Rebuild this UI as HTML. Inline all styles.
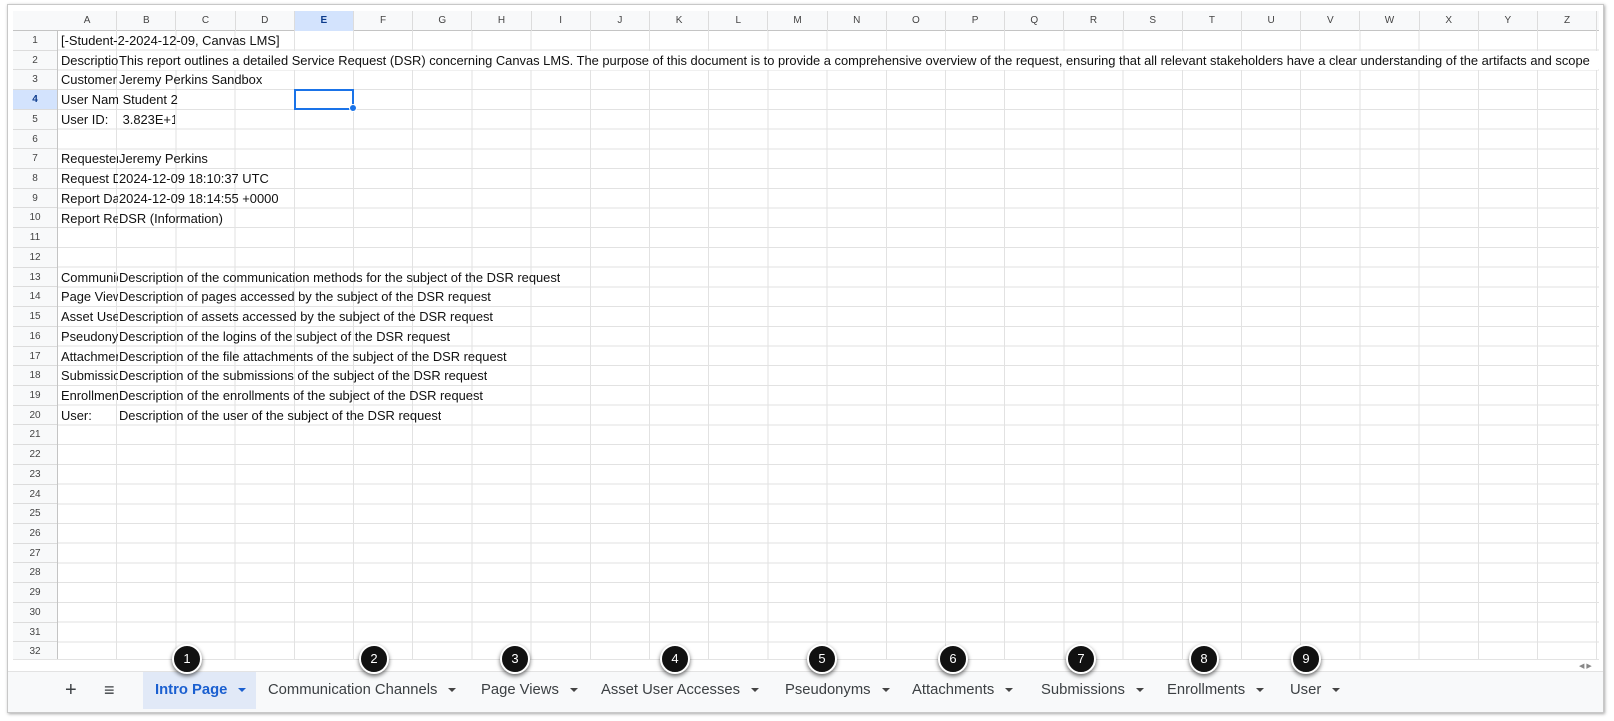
<!DOCTYPE html>
<html><head><meta charset="utf-8"><style>
*{margin:0;padding:0;box-sizing:border-box}
body{width:1614px;height:721px;background:#fff;position:relative;overflow:hidden;font-family:"Liberation Sans",Arial,sans-serif}
#frame{position:absolute;left:7px;top:4px;width:1597px;height:709px;border:1px solid #c8c8c8;box-shadow:1px 1px 3px rgba(0,0,0,.35);background:#fff;overflow:hidden}
.abs{position:absolute}
#grid{left:50px;top:26px;width:1541px;height:628px;
background-image:repeating-linear-gradient(to right,transparent 0,transparent 58.2px,#e2e2e2 58.2px,#e2e2e2 59.2px),repeating-linear-gradient(to bottom,transparent 0,transparent 18.72px,#e2e2e2 18.72px,#e2e2e2 19.72px);}
#colh{left:5px;top:6px;width:1586px;height:20px;background:#f8f9fa;border-bottom:1px solid #c4c4c4}
#rowh{left:5px;top:26px;width:45px;height:628px;background:#f8f9fa;border-right:1px solid #c4c4c4}
.ch{position:absolute;top:0;height:20px;width:59.2px;text-align:center;font-size:10px;line-height:20px;color:#444;border-right:1px solid #dcdcdc}
.rh{position:absolute;left:0;width:44px;height:19.72px;text-align:center;font-size:10px;line-height:19px;color:#444;border-bottom:1px solid #dcdcdc}
.c{position:absolute;font-size:12.9px;line-height:19.72px;color:#111;white-space:nowrap;overflow:hidden}
#tabs{left:0;top:666px;width:1597px;height:43px;background:#f8f9fa;border-top:1px solid #e3e3e3}
.t{position:absolute;top:0;height:37px;line-height:37px;font-size:14.8px;color:#3c4043;white-space:nowrap}
.t i{display:inline-block;width:0;height:0;border-left:4px solid transparent;border-right:4px solid transparent;border-top:4px solid #444;margin-left:11px;vertical-align:middle}
.b{position:absolute;top:644px;width:30px;height:30px;border-radius:50%;background:#111;border:2px solid #fff;box-shadow:0 2px 4px rgba(0,0,0,.6);color:#fff;font-size:13px;text-align:center;line-height:26px;z-index:5}
</style></head><body>
<div id="frame">
<div class="abs" id="grid"></div>
<div class="abs" id="colh">
<div class="ch" style="left:45px">A</div><div class="ch" style="left:104.2px">B</div><div class="ch" style="left:163.4px">C</div><div class="ch" style="left:222.6px">D</div><div class="ch" style="left:281.8px;background:#d3e3fd;font-weight:bold;color:#0b3a8c">E</div><div class="ch" style="left:341px">F</div><div class="ch" style="left:400.2px">G</div><div class="ch" style="left:459.4px">H</div><div class="ch" style="left:518.6px">I</div><div class="ch" style="left:577.8px">J</div><div class="ch" style="left:637px">K</div><div class="ch" style="left:696.2px">L</div><div class="ch" style="left:755.4px">M</div><div class="ch" style="left:814.6px">N</div><div class="ch" style="left:873.8px">O</div><div class="ch" style="left:933px">P</div><div class="ch" style="left:992.2px">Q</div><div class="ch" style="left:1051.4px">R</div><div class="ch" style="left:1110.6px">S</div><div class="ch" style="left:1169.8px">T</div><div class="ch" style="left:1229px">U</div><div class="ch" style="left:1288.2px">V</div><div class="ch" style="left:1347.4px">W</div><div class="ch" style="left:1406.6px">X</div><div class="ch" style="left:1465.8px">Y</div><div class="ch" style="left:1525px">Z</div>
</div>
<div class="abs" id="rowh">
<div class="rh" style="top:0">1</div><div class="rh" style="top:19.72px">2</div><div class="rh" style="top:39.44px">3</div><div class="rh" style="top:59.16px;background:#d3e3fd;font-weight:bold;color:#0b3a8c">4</div><div class="rh" style="top:78.88px">5</div><div class="rh" style="top:98.6px">6</div><div class="rh" style="top:118.32px">7</div><div class="rh" style="top:138.04px">8</div><div class="rh" style="top:157.76px">9</div><div class="rh" style="top:177.48px">10</div><div class="rh" style="top:197.2px">11</div><div class="rh" style="top:216.92px">12</div><div class="rh" style="top:236.64px">13</div><div class="rh" style="top:256.36px">14</div><div class="rh" style="top:276.08px">15</div><div class="rh" style="top:295.8px">16</div><div class="rh" style="top:315.52px">17</div><div class="rh" style="top:335.24px">18</div><div class="rh" style="top:354.96px">19</div><div class="rh" style="top:374.68px">20</div><div class="rh" style="top:394.4px">21</div><div class="rh" style="top:414.12px">22</div><div class="rh" style="top:433.84px">23</div><div class="rh" style="top:453.56px">24</div><div class="rh" style="top:473.28px">25</div><div class="rh" style="top:493px">26</div><div class="rh" style="top:512.72px">27</div><div class="rh" style="top:532.44px">28</div><div class="rh" style="top:552.16px">29</div><div class="rh" style="top:571.88px">30</div><div class="rh" style="top:591.6px">31</div><div class="rh" style="top:611.32px">32</div>
</div>
<div class="c" style="left:53px;top:26px">[-Student-2-2024-12-09, Canvas LMS]</div>
<div class="c" style="left:53px;top:45.7px;width:57px">Description</div>
<div class="c" style="left:110px;top:45.7px;width:1480px;background:#fff;padding-left:1px">This report outlines a detailed Service Request (DSR) concerning Canvas LMS. The purpose of this document is to provide a comprehensive overview of the request, ensuring that all relevant stakeholders have a clear understanding of the artifacts and scope</div>
<div class="c" style="left:53px;top:65.4px;width:57px">Customer</div>
<div class="c" style="left:111px;top:65.4px">Jeremy Perkins Sandbox</div>
<div class="c" style="left:53px;top:85.2px;width:57px">User Name</div>
<div class="c" style="left:111px;top:85.2px">&nbsp;Student 2</div>
<div class="c" style="left:53px;top:104.9px;width:57px">User ID:</div>
<div class="c" style="left:111px;top:104.9px;width:56px">&nbsp;3.823E+10</div>
<div class="c" style="left:53px;top:144.3px;width:57px">Requester</div>
<div class="c" style="left:111px;top:144.3px">Jeremy Perkins</div>
<div class="c" style="left:53px;top:164px;width:57px">Request Date</div>
<div class="c" style="left:111px;top:164px">2024-12-09 18:10:37 UTC</div>
<div class="c" style="left:53px;top:183.8px;width:57px">Report Date</div>
<div class="c" style="left:111px;top:183.8px">2024-12-09 18:14:55 +0000</div>
<div class="c" style="left:53px;top:203.5px;width:57px">Report Reason</div>
<div class="c" style="left:111px;top:203.5px">DSR (Information)</div>
<div class="c" style="left:53px;top:262.6px;width:57px">Communication</div>
<div class="c" style="left:111px;top:262.6px">Description of the communication methods for the subject of the DSR request</div>
<div class="c" style="left:53px;top:282.4px;width:57px">Page Views</div>
<div class="c" style="left:111px;top:282.4px">Description of pages accessed by the subject of the DSR request</div>
<div class="c" style="left:53px;top:302.1px;width:57px">Asset User</div>
<div class="c" style="left:111px;top:302.1px">Description of assets accessed by the subject of the DSR request</div>
<div class="c" style="left:53px;top:321.8px;width:57px">Pseudonyms</div>
<div class="c" style="left:111px;top:321.8px">Description of the logins of the subject of the DSR request</div>
<div class="c" style="left:53px;top:341.5px;width:57px">Attachments</div>
<div class="c" style="left:111px;top:341.5px">Description of the file attachments of the subject of the DSR request</div>
<div class="c" style="left:53px;top:361.2px;width:57px">Submissions</div>
<div class="c" style="left:111px;top:361.2px">Description of the submissions of the subject of the DSR request</div>
<div class="c" style="left:53px;top:381px;width:57px">Enrollments</div>
<div class="c" style="left:111px;top:381px">Description of the enrollments of the subject of the DSR request</div>
<div class="c" style="left:53px;top:400.7px;width:57px">User:</div>
<div class="c" style="left:111px;top:400.7px">Description of the user of the subject of the DSR request</div>
<div class="abs" style="left:286px;top:84px;width:60px;height:20.7px;border:2px solid #1a73e8"></div>
<div class="abs" style="left:341px;top:99px;width:8px;height:8px;border-radius:50%;background:#1a73e8;border:1px solid #fff"></div>
<div class="abs" style="left:5px;top:654px;width:1586px;height:12px;background:#fff;border-top:1px solid #e3e3e3"></div>
<div class="abs" style="left:1571px;top:657px;font-size:7px;color:#888">◀ ▶</div>
<div class="abs" id="tabs">
<div class="t" style="left:57px;font-size:20px">+</div>
<div class="t" style="left:96px;font-size:18px">≡</div>
<div class="t" style="left:135px;width:113px;background:#e1e9f7;color:#1a5fd0;font-weight:bold;padding-left:12px">Intro Page<i style="border-top-color:#1a5fd0"></i></div>
<div class="t" style="left:260px">Communication Channels<i></i></div>
<div class="t" style="left:473px">Page Views<i></i></div>
<div class="t" style="left:593px">Asset User Accesses<i></i></div>
<div class="t" style="left:777px">Pseudonyms<i></i></div>
<div class="t" style="left:904px">Attachments<i></i></div>
<div class="t" style="left:1033px">Submissions<i></i></div>
<div class="t" style="left:1159px">Enrollments<i></i></div>
<div class="t" style="left:1282px">User<i></i></div>
</div>
</div>
<div class="b" style="left:172px">1</div>
<div class="b" style="left:359px">2</div>
<div class="b" style="left:500px">3</div>
<div class="b" style="left:660px">4</div>
<div class="b" style="left:807px">5</div>
<div class="b" style="left:938px">6</div>
<div class="b" style="left:1066px">7</div>
<div class="b" style="left:1189px">8</div>
<div class="b" style="left:1291px">9</div>
</body></html>
